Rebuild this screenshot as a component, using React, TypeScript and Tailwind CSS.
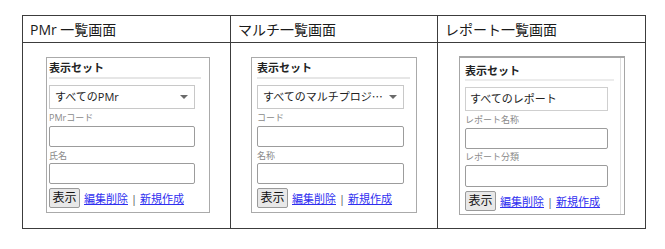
import React from 'react';

const font = "font-['Open_Sans','Noto_Sans_CJK_JP',sans-serif]";

const Arrow: React.FC = () => (
  <span className="h-0 w-0 border-x-[4px] border-t-[4px] border-x-transparent border-t-[#6a6a6a]" />
);

const Label: React.FC<{ text: string; className?: string }> = ({ text, className = '' }) => (
  <div className={`text-[9px] leading-[12px] text-[#8a8a8a] ${className}`}>{text}</div>
);

const Box: React.FC<{ className?: string }> = ({ className = '' }) => (
  <div className={`rounded-[2px] border border-[#9c9c9c] bg-white ${className}`} />
);

const Actions: React.FC<{ className?: string }> = ({ className = '' }) => (
  <div className={`flex items-center ${className}`}>
    <div className="flex h-[20px] w-[31px] items-center justify-center rounded-[2px] border border-[#9a9a9a] bg-[#e8e8e8] text-[12px] leading-none text-[#111]">
      表示
    </div>
    <a className="ml-[4px] text-[11px] leading-none text-[#2f2ff0] underline">編集削除</a>
    <span className="mx-[3px] text-[11px] leading-none text-[#555]">|</span>
    <a className="text-[11px] leading-none text-[#2f2ff0] underline">新規作成</a>
  </div>
);

const Title: React.FC = () => (
  <div className="text-[11px] font-bold leading-[14px] text-[#222]">表示セット</div>
);

const Header: React.FC<{ text: string }> = ({ text }) => (
  <div className="flex h-[27px] items-center border-b border-[#3c3c3c] pl-[7px] text-[14px] text-[#1a1a1a]">
    {text}
  </div>
);

const App: React.FC = () => {
  return (
    <div className={`h-[249px] w-[665px] bg-white ${font}`}>
      <div className="ml-[22px] pt-[15px]">
        <div className="grid w-[624px] grid-cols-[207px_207px_208px] border border-[#3c3c3c]">
          {/* PMr */}
          <div className="flex h-[212px] flex-col">
            <Header text="PMr 一覧画面" />
            <div className="ml-[23px] mt-[14px] w-[164px] border border-[#aaaaaa] pb-[4px] pl-[2px] pt-[3px]">
              <Title />
              <div className="mt-[2px] h-[2px] w-[152px] bg-[#e6e6e6]" />
              <div className="mt-[6px] flex h-[24px] w-[146px] items-center justify-between border border-[#c8c8c8] pl-[5px] pr-[6px] text-[11px] text-[#222]">
                <span>すべてのPMr</span>
                <Arrow />
              </div>
              <Label text="PMrコード" className="mt-[3px]" />
              <Box className="mt-[2px] h-[21px] w-[146px]" />
              <Label text="氏名" className="mt-[3px]" />
              <Box className="mt-[1px] h-[21px] w-[146px]" />
              <Actions className="mt-[4px]" />
            </div>
          </div>

          {/* マルチ */}
          <div className="flex h-[212px] flex-col border-l border-[#3c3c3c]">
            <Header text="マルチ一覧画面" />
            <div className="ml-[20px] mt-[14px] w-[166px] border border-[#aaaaaa] pb-[4px] pl-[5px] pt-[3px]">
              <Title />
              <div className="mt-[2px] h-[2px] w-[153px] bg-[#e6e6e6]" />
              <div className="mt-[6px] flex h-[24px] w-[147px] items-center justify-between border border-[#c8c8c8] pl-[5px] pr-[6px] text-[11px] text-[#222]">
                <span>すべてのマルチプロジ⋯</span>
                <Arrow />
              </div>
              <Label text="コード" className="mt-[3px]" />
              <Box className="mt-[2px] h-[21px] w-[147px]" />
              <Label text="名称" className="mt-[3px]" />
              <Box className="mt-[1px] h-[21px] w-[147px]" />
              <Actions className="mt-[4px]" />
            </div>
          </div>

          {/* レポート */}
          <div className="flex h-[212px] flex-col border-l border-[#3c3c3c]">
            <Header text="レポート一覧画面" />
            <div className="ml-[21px] mt-[13px] w-[166px] border border-t-2 border-[#a6a6a6]">
              <div className="w-[161px] border-r border-[#dedede] pb-[3px] pl-[5px] pt-[6px]">
                <Title />
                <div className="mt-[1px] h-[2px] w-[149px] bg-[#ececec]" />
                <div className="mt-[6px] flex h-[24px] w-[143px] items-center border border-[#cfcfcf] pl-[4px] text-[11px] text-[#222]">
                  すべてのレポート
                </div>
                <Label text="レポート名称" className="mt-[3px]" />
                <Box className="mt-[2px] h-[21px] w-[143px]" />
                <Label text="レポート分類" className="mt-[2px]" />
                <Box className="mt-[2px] h-[22px] w-[143px]" />
                <Actions className="mt-[4px]" />
              </div>
            </div>
          </div>
        </div>
      </div>
    </div>
  );
};

export default App;
